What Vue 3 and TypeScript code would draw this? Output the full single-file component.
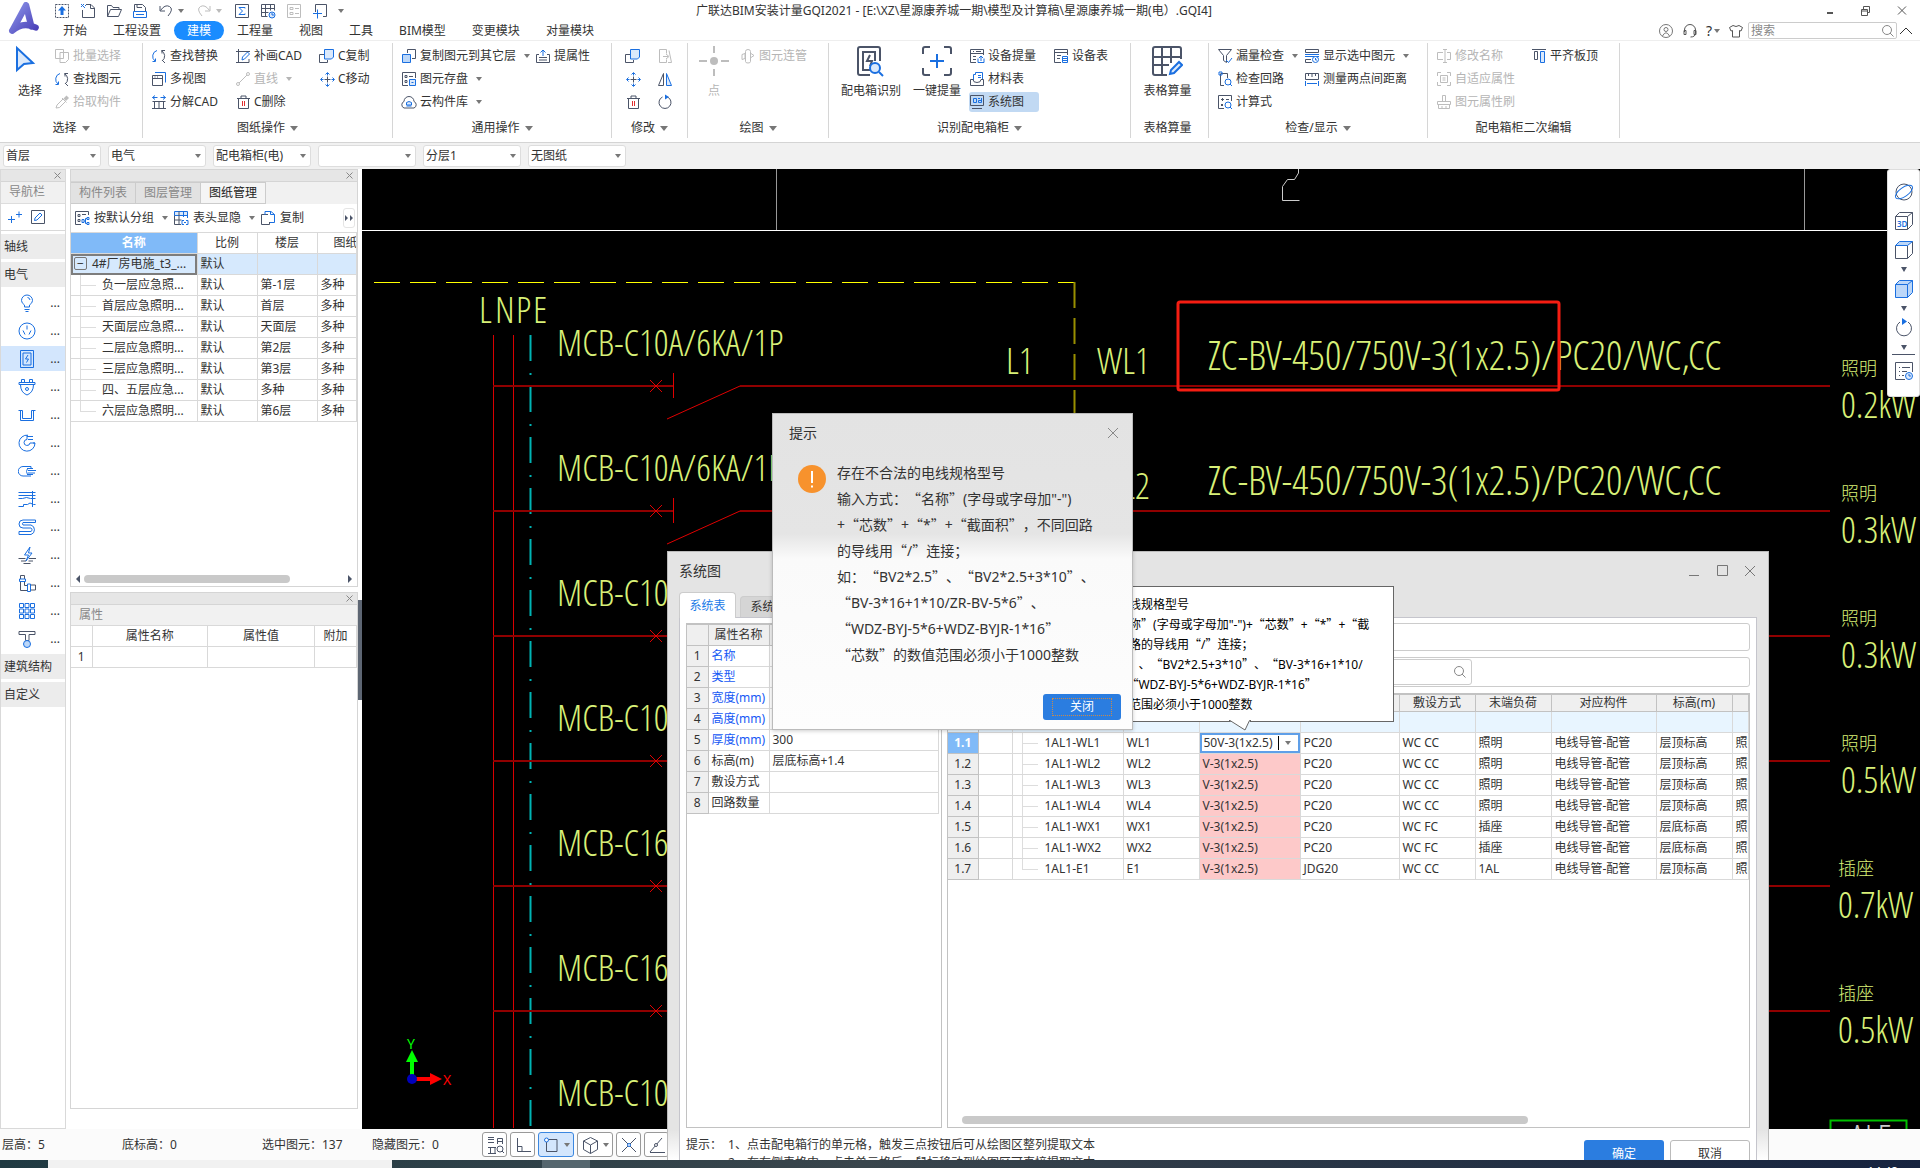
<script setup lang="ts">
interface Btn { i: string; t: string; dis?: boolean; caret?: boolean; on?: boolean }
interface Group { label: string; more?: boolean; big: Btn[]; cols: Btn[][] }

const D = '#4b5468'
const B = '#1a6fe0'
const G = '#bdbdbd'
const s = (c: string, d: string, f = 'none'): string => `<path d="${d}" stroke="${c}" fill="${f}"/>`
const f = (c: string, d: string): string => `<path d="${d}" fill="${c}" stroke="none"/>`

const trash = s(D, 'M2 4.500h13M6 4.500V2h5v2.500M3.500 5v9.500h10V5') + s('#e03030', 'M7.500 7v5M9.500 7v5')
const move = s(D, 'M8.500 5.500v6M5.500 8.500h6') + s(B, 'M6.500 3.500l2-2 2 2M6.500 13.500l2 2 2-2M3.500 6.500l-2 2 2 2M13.500 6.500l2 2-2 2M8.500 2v2.500M8.500 12.500v2.500M2 8.500h2.500M12.500 8.500h2.500')
const copy = s(D, 'M5 6.500H.5v8h8V12') + s(B, 'M5.500 1.500h9v7.500l-2 2h-7z', '#dbe9fb')
const find = s(B, 'M6 2.500a6 6 0 0 0-2 10.500M1.500 13.500h3V10.500', 'none') + s(D, 'M10 2.500a6 6 0 0 1 1 10.500M14 2.500h-3V5.500M11 12l3 3')

const icons: Record<string, string> = {
  logo: `<defs><linearGradient id="lg" x1="0" y1="0" x2="1" y2="1"><stop offset="0" stop-color="#8b94e8"/><stop offset="1" stop-color="#4a3fb8"/></linearGradient></defs><path d="M4 27L17 3l5 20M4 27q10-9 22-3" fill="none" stroke="url(#lg)" stroke-width="6" stroke-linecap="round" stroke-linejoin="round"/>`,
  up: `<path d="M1.500 1.500h13v13h-13z" fill="none" stroke="${D}" stroke-dasharray="2 1"/>` + f(B, 'M8 3l4 4.500H9.500V12h-3V7.500H4z'),
  neu: s(D, 'M6 1.500h5l3.500 3.500v9.500h-12V7M10.500 1.500v4h4') + f(B, 'M1 1h1v1H1zM3 1h1v1H3zM2 2h1v1H2zM1 3h1v1H1zM3 3h1v1H3zM5 2h1v1H5zM4 4h1v1H4z'),
  open: s(D, 'M1.500 13.500v-11h4l1.500 2h6v2M1.500 13.500l3-7h11l-3 7z'),
  save: s(D, 'M2.500 8V1.500h8l3 3V8M5 1.500v3h5') + s(B, 'M1.500 14.500v-6h13v6zM4 11.500h8'),
  undo: s(D, 'M2 3v5h5M2.500 7.500Q7 1 11.500 3.500T10 13'),
  redo: s(G, 'M14 3v5H9M13.500 7.500Q9 1 4.500 3.500T6 13'),
  sum: s(D, 'M1.500 1.500h13v13h-13z') + s(B, 'M11 5.500V4.500H5L8.500 8 5 11.500h6v-1'),
  grid: s(D, 'M1.500 1.500h13v6M1.500 1.500v12h6M1.500 5.500h13M1.500 9.500h7M5.500 1.500v12M10.500 1.500v6') + `<circle cx="12" cy="12" r="3" fill="#dbe9fb" stroke="${B}"/>` + s(B, 'M12 10v2h2'),
  listg: s(G, 'M1.500 1.500h13v13h-13zM4 4.500h3v2H4zM4 9.500h3v2H4zM9 5.500h4M9 10.500h4'),
  frame: s(D, 'M6 1.500H3.500V6M10 1.500h4.500v12H11') + s(D, 'M6 1.500h5M3.500 5v4') + s(B, 'M1 10.500h9M5.500 6.500v9'),
  cursor: `<path d="M3 3v22l7-6 9-1z" fill="#dbe9fb" stroke="${B}" stroke-width="2"/>`,
  batch: s(G, 'M1.500 1.500h8v9h-8zM6 4.500h8.500v7l-3 3H6z', '#fff'),
  find,
  pick: s(G, 'M2 14l1-3 6-6 2.500 2.500-6 6zM8 4l4.500 4.500', 'none') + f(G, 'M9.500 4.500l3-3 2.500 2.500-3 3z'),
  views: s(D, 'M1.500 4.500h10v10h-10zM1.500 7.500h10M3.500 6h1M6 6h1') + s(B, 'M4 1.500h10.500v10'),
  split: s(B, 'M1.500 3.500h5M4 1.500l-2.500 2L4 5.500M9.500 3.500h5M12 1.500l2.500 2L12 5.500') + s(D, 'M1.500 7.500h13M3.500 7.500v7h9v-7M8 7.500v7M1 14.500h3M12 14.500h3'),
  draw: s(D, 'M1 3.500h14M3.500 1v13M1 14.500h13V11') + s(B, 'M7 12l.5-3 5-5 2 2-5 5z'),
  line: s(G, 'M3 13L13 3') + `<circle cx="13" cy="3" r="1.500" fill="#fff" stroke="${G}"/><circle cx="3" cy="13" r="1.500" fill="#fff" stroke="${G}"/>`,
  trash, copy, move,
  layer: s(B, 'M1.500 6.500h8v8h-8z', '#bcd7f8') + s(D, 'M6.500 5V1.500h8v9H11'),
  attr: s(B, 'M8 8V2M5.500 4.500L8 2l2.500 2.500') + s(D, 'M4 6.500H1.500v8h13v-8H12M4 9.500h8M4 12h8'),
  store: s(D, 'M7 14.500H1.500v-13h13V7M4 4.500h2v2H4zM8 5.500h4M4 9.500h2v2H4z') + s(B, 'M8.500 8.500h6v6h-6zM10.500 11.500h2', '#dbe9fb'),
  cloud: s(D, 'M3 14A3.500 3.500 0 0 1 3 7.500 5 5 0 0 1 13 7.500 3.500 3.500 0 0 1 13 14z') + s(B, 'M5.500 8.500q2.500-2 5 0v2.500h-5zM5.500 12h5', '#dbe9fb'),
  stretch: s(G, 'M2.500 1.500h7v4M2.500 1.500v13h7v-3M6 8.500h5M9 6l3 2.500L9 11M12 2.500l2.500 12H11'),
  mirror: s(D, 'M6.500 2.500v12h-5z') + s(B, 'M9.500 2.500v12h5z', '#dbe9fb'),
  rotate: s(D, 'M5.500 3a6 6 0 1 0 5 0') + f(B, 'M8 .5L12 3 8 5.500z'),
  point: `<circle cx="16" cy="16" r="4" fill="${G}"/><path d="M16 1v7M16 24v7M1 16h8M23 16h8" stroke="${G}" stroke-width="2"/>`,
  pipe: s(G, 'M5.500 3.500a2.500 2 0 0 1 5 0v10a2.500 1.500 0 0 1-5 0zM2 6.500l3-1v5l-3 1zM11 5.500l3 2-3 2'),
  box: `<g stroke-width="2" transform="translate(-2 0)"><path d="M27 16V4a2 2 0 0 0-2-2H7a2 2 0 0 0-2 2v24a2 2 0 0 0 2 2h10" stroke="${D}" fill="none"/><path d="M22 16V7H10v18h7" stroke="${D}" fill="none"/><path d="M17 10l-3 6h5l-2 5" stroke="${D}" fill="none"/><circle cx="22" cy="23" r="5" stroke="${B}" fill="#dbe9fb"/><path d="M26 27l4 4" stroke="${B}"/></g>`,
  oneKey: `<g stroke-width="2" fill="none"><path d="M9 2H4a2 2 0 0 0-2 2v5M23 2h5a2 2 0 0 1 2 2v5M2 23v5a2 2 0 0 0 2 2h5M30 23v5a2 2 0 0 1-2 2h-5" stroke="${D}"/><path d="M9 16h14M16 9v14" stroke="${B}"/></g>`,
  devUp: s(D, 'M7 14.500H1.500v-13h13V7M1.500 5.500h13M4 3.500h1M7 3.500h5M4 8.500h3M4 11.500h3') + s(B, 'M9 10.500v4h6v-4M12 13V8M10 10l2-2 2 2'),
  material: s(B, 'M4.500 9V3.500h2v-2h7V9M9 4.500h3M9 6.500h3') + s(D, 'M4 8.500H1.500v6h13v-6H12q0 3-4 3t-4-3z'),
  system: s(D, 'M1.500 1.500h13v10h-13zM3 14.500h10') + s(B, 'M4.500 4.500h3v4h-3zM9 4.500h2M12.500 4v4.500h-3V6.500h3'),
  devTab: s(D, 'M8 14.500H1.500v-13h13V7M1.500 4.500h13M4 7.500h4M4 10.500h3') + s(B, 'M9.500 8.500h5v6h-5zM9.500 10.500h5M9.500 12.500h5'),
  sheet: `<g stroke-width="2" fill="none"><path d="M30 14V4a2 2 0 0 0-2-2H4a2 2 0 0 0-2 2v24a2 2 0 0 0 2 2h12M2 12h28M2 20h16M11 2v28M20 2v16" stroke="${D}"/><path d="M19 29l1-4 8-8 3 3-8 8z" stroke="${B}" fill="#dbe9fb"/></g>`,
  funnel: s(D, 'M1.500 1.500h13l-5 6v7l-3-2V7.500z') + s(B, 'M9 12l2.500 2.500L15 10'),
  loop: s(D, 'M3.500 3v11.500H7M3.500 2.500h7V7') + s(B, 'M2 1h3v3H2z') + `<circle cx="11" cy="11" r="3" fill="none" stroke="${B}"/>` + s(B, 'M13 13l2 2'),
  calc: s(D, 'M14.500 7V1.500h-13v13H7M4 5.500h3M5.500 4v3M9 5.500h3M4 10l2 2M6 10l-2 2') + `<circle cx="11" cy="11" r="3" fill="#fff" stroke="${B}"/>` + s(B, 'M13 13l2 2'),
  show: s(D, 'M1.500 1.500h13v3h-13zM7 11.500H1.500v3H8') + s(B, 'M1 6.500h14M1 8.500h14') + `<circle cx="11.500" cy="11.500" r="3" fill="#fff" stroke="${B}"/>` + s(B, 'M11.500 10v2h1.500'),
  ruler: s(D, 'M1.500 2.500h13v6h-13zM4.500 2.500V5M8 2.500V6M11.500 2.500V5') + s(B, 'M1.500 10v5M14.500 10v5M3 12.500h10'),
  rename: s(G, 'M7 4.500H1.500v7H7M11 4.500h3.500v7H11M9 2v12M7 1.500h4M7 14.500h4'),
  adapt: s(G, 'M1.500 5V1.500H5M11 1.500h3.500V5M14.500 11v3.500H11M5 14.500H1.500V11M4.500 4.500h7v7h-7zM6.500 7h3M6.500 9h3'),
  brush: s(G, 'M1.500 7.500h13v3h-13zM6.500 7.500v-6h3v6M2.500 10.500v4h11v-4M6 12v2.500M10 12v2.500'),
  align: s(D, 'M1 1.500h14M3.500 3.500h3v8h-3z') + s(B, 'M9.500 3.500h4v11h-4z', '#dbe9fb'),
  user: `<circle cx="8" cy="8" r="6.500" fill="none" stroke="#777"/><circle cx="8" cy="6.500" r="2" fill="none" stroke="#777"/><path d="M4.500 13Q8 6.500 11.500 13" fill="none" stroke="#777"/>`,
  head: s('#555', 'M2.500 9V7a5.500 5.500 0 0 1 11 0v3q0 4-5 4M2 7.500h2v4H2zM12 7.500h2v4h-2z'),
  shirt: s('#555', 'M5 2.500L1.500 4.500 3 8l1.500-.5v6.500h7V7.500L13 8l1.500-3.500L11 2.500q-3 2-6 0z'),
  search: `<circle cx="7" cy="7" r="4.500" fill="none" stroke="#888"/>` + s('#888', 'M10 10l3.500 3.500'),
  chevUp: s('#333', 'M2 11l6-6 6 6'),
  min: s('#555', 'M5 10.500h6M5 9.500h6'),
  restore: s('#555', 'M3.500 6.500h6v6h-6zM5.500 6V3.500h6v6H10M3.500 8h6'),
  close: s('#555', 'M4 3.500l8 8M12 3.500l-8 8'),
  x: s('#888', 'M1.500 1.500l6 6M7.500 1.500l-6 6'),
  more: f(D, 'M1 4l3 3-3 3zM6 4l3 3-3 3z'),
  plus: s(B, 'M1 10.500h7M4.500 7v7M9 5.500h6M12 2.500v6'),
  edit: s(D, 'M1.500 1.500h13v13h-13z') + s(B, 'M4.500 11.500l.5-2.500 5-5 2 2-5 5z'),
  group: s(D, 'M7 14.500H1.500v-13h13V5M4 4.500h2v2H4zM8 4.500h4M4 9.500h2v2H4z') + s(B, 'M8 9.500h2v3H8zM13 7.500h2v2h-2zM13 12.500h2v2h-2zM10 11h1.500V8.500H13M11.500 11v2.500H13'),
  thead: s(B, 'M1.500 1.500h13v4h-13z', '#dbe9fb') + s(D, 'M1.500 5.500v9H8M1.500 10h7M6 1.500v13') + s(B, 'M14.500 5v3M10.500 1.500V7M9 10.500h2M13 10.500h2v4h-2M11 14.500H9v-4M11 12.500h2'),
  dup: s(D, 'M5 4.500H1.500v10h8V12M5 4.500h3') + s(B, 'M5 5V1.500h6l3.500 3v8H10M10.500 1.500v3h4'),
  bulb: s(B, 'M6.500 13v-2Q3.500 9 3.500 6.500a5.500 5.500 0 0 1 11 0Q14.500 9 11.500 11v2zM6.500 15.500h5M7.500 17.500h3M9.500 3.500q2 0 2.500 2.500'),
  socket: `<circle cx="9" cy="9" r="8" fill="none" stroke="${B}"/>` + s(B, 'M9 3.500v4M5 8.500l2 4M13 8.500l-2 4'),
  panel: s(B, 'M2.500 .5h13v17h-13zM5 3h8v12H5z') + s(B, 'M10 5L7.500 9h3L8.500 12.500'),
  smoke: s(B, 'M1 4.500h16v2H1zM3.500 1.500h3v3h-3zM11.500 1.500h3v3h-3zM2.500 6.500q0 8 6.500 10.500 6.500-2.500 6.500-10.500') + `<circle cx="9" cy="11" r="1.500" fill="none" stroke="${B}"/>`,
  tray: s(B, 'M.5 4.500h4v8h9v-8h4M2.500 4.500v10h13v-10'),
  coil: s(B, 'M10 1.200A8 8 0 1 0 17 9h-5a3 3 0 1 1-3-3.500M9 1v4.500M9 2.500h6M10 5.500h5M15 9h2'),
  cable: s(B, 'M9 4.500H5a4.500 4.500 0 0 0 0 9.500h8M9 4.500h4v2M9 6.500h6M10 8.500h8M10 11h7M9 12.500h6M9.500 6.500q-2 3 0 6'),
  wires: s(B, 'M.5 2.500h17M.5 5.500h17M.5 8.500h4q4-2 8 0h5M14.500 1v16M.5 16.500h5v-2h4q2-3 6 0h2'),
  hose: s(B, 'M17.500 4.500V2H5a4 4 0 0 0 0 8h8a2 2 0 0 1 0 3.500H1v3h12a5 5 0 0 0 0-9.500H5a2 2 0 0 1 0-2.500z'),
  ground: s(B, 'M12 1L6.500 9h4L8 15l6-8h-3.500z') + s(D, 'M.5 12.500h7M11 12.500h7M3 15h5M10.500 15H15M5.500 17.500h7'),
  elbow: s(D, 'M2.500 5V1.500h4V5M2.500 7.500v9h7M6.500 7.500v4h3M12.500 11h5v5h-5') + s(B, 'M1.500 5h6v2.500h-6zM9.500 10h3v7.500h-3z'),
  cells: s(B, 'M1.500 1.500h4v4h-4zM7 1.500h4v4H7zM12.500 1.500h4v4h-4zM1.500 7h4v4h-4zM7 7h4v4H7zM12.500 7h4v4h-4zM1.500 12.500h4v4h-4zM7 12.500h4v4H7zM12.500 12.500h4v4h-4z'),
  tee: s(D, 'M1 1.500h16v3h-6v6H7.500v-6H1z') + `<circle cx="9" cy="14" r="3.500" fill="#bcd7f8" stroke="${B}"/>`,
  orbit: `<circle cx="10" cy="10" r="8" fill="none" stroke="${D}"/><ellipse cx="10" cy="10" rx="10" ry="4.500" transform="rotate(-35 10 10)" fill="none" stroke="${B}"/>`,
  cube3: s(D, 'M1.500 5.500h12v13h-12zM1.500 5.500l4-4h13v12l-5 5M13.500 5.500l5-4') + `<text x="3" y="16" font-size="8" font-family="Noto Sans" font-weight="600" fill="${B}">3D</text>`,
  cubeTop: s(D, 'M1.500 5.500v13h12v-13M18.500 1.500v12l-5 5') + s(B, 'M1.500 5.500l4-4h13l-5 4z', '#bcd7f8'),
  cubeFill: s(B, 'M1.500 5.500h12v13h-12zM1.500 5.500l4-4h13v12l-5 5M13.500 5.500l5-4', '#bcd7f8'),
  spin: s(D, 'M6 4a7.500 7.500 0 1 0 8 0') + f(B, 'M8 0l5 3.500L8 7z'),
  detail: s(D, 'M11 18.500H1.500v-17h17V11M5 6.500h1M8 6.500h8M5 10.500h1M8 10.500h5M5 14.500h1M8 14.500h2') + `<circle cx="15" cy="15" r="3.500" fill="#dbe9fb" stroke="${B}"/>` + s(B, 'M15 13v2h2'),
  stA: s(D, 'M2 3.500h6M2 6.500h6M2 1.500h6M11.500 8V2.500h5V8M11.500 5.500h5M2 17.500h8M4.500 11v6M9 11v6M2 11.500h8') + `<circle cx="14" cy="13" r="3" fill="none" stroke="${D}"/>` + s(D, 'M16 15l2 2'),
  stB: s(D, 'M3.500 2v13.500H17M3.500 10.500H8v5'),
  stC: s(D, 'M5 3.500h10v12H4.500V5') + `<circle cx="4.500" cy="4" r="2" fill="#fff" stroke="${B}"/>`,
  stD: s(D, 'M9.500 1.500l7 3.500v8.500l-7 4-7-4V5zM2.500 5l7 4 7-4M9.500 9v8.500'),
  stE: s(D, 'M2 2l14 14M16 2L2 16') + `<circle cx="9" cy="9" r="1.500" fill="#fff" stroke="${B}"/>`,
  stF: s(D, 'M2 16L14 2M2 16.500h15') + `<circle cx="8" cy="9" r="1.500" fill="#fff" stroke="${D}"/>`,
}

const quick = ['up', 'neu', 'open', 'save', 'undo', 'redo', 'sum', 'grid', 'listg', 'frame']
const tabs = ['开始', '工程设置', '建模', '工程量', '视图', '工具', 'BIM模型', '变更模块', '对量模块']
const groups: Group[] = [
  { label: '选择', more: true, big: [{ i: 'cursor', t: '选择' }], cols: [[{ i: 'batch', t: '批量选择', dis: true }, { i: 'find', t: '查找图元' }, { i: 'pick', t: '拾取构件', dis: true }]] },
  { label: '图纸操作', more: true, big: [], cols: [
    [{ i: 'find', t: '查找替换' }, { i: 'views', t: '多视图' }, { i: 'split', t: '分解CAD' }],
    [{ i: 'draw', t: '补画CAD' }, { i: 'line', t: '直线', dis: true, caret: true }, { i: 'trash', t: 'C删除' }],
    [{ i: 'copy', t: 'C复制' }, { i: 'move', t: 'C移动' }]] },
  { label: '通用操作', more: true, big: [], cols: [
    [{ i: 'layer', t: '复制图元到其它层', caret: true }, { i: 'store', t: '图元存盘', caret: true }, { i: 'cloud', t: '云构件库', caret: true }],
    [{ i: 'attr', t: '提属性' }]] },
  { label: '修改', more: true, big: [], cols: [
    [{ i: 'copy', t: '' }, { i: 'move', t: '' }, { i: 'trash', t: '' }],
    [{ i: 'stretch', t: '', dis: true }, { i: 'mirror', t: '' }, { i: 'rotate', t: '' }]] },
  { label: '绘图', more: true, big: [{ i: 'point', t: '点', dis: true }], cols: [[{ i: 'pipe', t: '图元连管', dis: true }]] },
  { label: '识别配电箱柜', more: true, big: [{ i: 'box', t: '配电箱识别' }, { i: 'oneKey', t: '一键提量' }], cols: [
    [{ i: 'devUp', t: '设备提量' }, { i: 'material', t: '材料表' }, { i: 'system', t: '系统图', on: true }],
    [{ i: 'devTab', t: '设备表' }]] },
  { label: '表格算量', big: [{ i: 'sheet', t: '表格算量' }], cols: [] },
  { label: '检查/显示', more: true, big: [], cols: [
    [{ i: 'funnel', t: '漏量检查', caret: true }, { i: 'loop', t: '检查回路' }, { i: 'calc', t: '计算式' }],
    [{ i: 'show', t: '显示选中图元', caret: true }, { i: 'ruler', t: '测量两点间距离' }]] },
  { label: '配电箱柜二次编辑', big: [], cols: [
    [{ i: 'rename', t: '修改名称', dis: true }, { i: 'adapt', t: '自适应属性', dis: true }, { i: 'brush', t: '图元属性刷', dis: true }],
    [{ i: 'align', t: '平齐板顶' }]] },
]
const combos = ['首层', '电气', '配电箱柜(电)', '', '分层1', '无图纸']
const navIcons = ['bulb', 'socket', 'panel', 'smoke', 'tray', 'coil', 'cable', 'wires', 'hose', 'ground', 'elbow', 'cells', 'tee']
const drawings = [
  ['负一层应急照...', '默认', '第-1层', '多种'],
  ['首层应急照明...', '默认', '首层', '多种'],
  ['天面层应急照...', '默认', '天面层', '多种'],
  ['二层应急照明...', '默认', '第2层', '多种'],
  ['三层应急照明...', '默认', '第3层', '多种'],
  ['四、五层应急...', '默认', '多种', '多种'],
  ['六层应急照明...', '默认', '第6层', '多种'],
]
const props: { n: string; v: string; b?: boolean }[] = [
  { n: '名称', v: '', b: true }, { n: '类型', v: '', b: true }, { n: '宽度(mm)', v: '', b: true }, { n: '高度(mm)', v: '', b: true },
  { n: '厚度(mm)', v: '300', b: true }, { n: '标高(m)', v: '层底标高+1.4' }, { n: '敷设方式', v: '' }, { n: '回路数量', v: '' },
]
const circuits = [
  ['WL1', 'PC20', 'WC CC', '照明', '层顶标高'],
  ['WL2', 'PC20', 'WC CC', '照明', '层顶标高'],
  ['WL3', 'PC20', 'WC CC', '照明', '层顶标高'],
  ['WL4', 'PC20', 'WC CC', '照明', '层顶标高'],
  ['WX1', 'PC20', 'WC FC', '插座', '层底标高'],
  ['WX2', 'PC20', 'WC FC', '插座', '层底标高'],
  ['E1', 'JDG20', 'WC CC', '1AL', '层顶标高'],
]
const breakers = ['MCB-C10A/6KA/1P', 'MCB-C10A/6KA/1P', 'MCB-C10A', 'MCB-C10A', 'MCB-C16', 'MCB-C16', 'MCB-C10A']
const loads = [['照明', '0.2kW'], ['照明', '0.3kW'], ['照明', '0.3kW'], ['照明', '0.5kW'], ['插座', '0.7kW'], ['插座', '0.5kW']]
const alertLines = [
  '存在不合法的电线规格型号', '输入方式：“名称”(字母或字母加"-")', '+“芯数”+“*”+“截面积”，不同回路', '的导线用“/”连接；',
  '如：“BV2*2.5”、“BV2*2.5+3*10”、', '“BV-3*16+1*10/ZR-BV-5*6”、', '“WDZ-BYJ-5*6+WDZ-BYJR-1*16”', '“芯数”的数值范围必须小于1000整数',
]
const tipLines = [
  '存在不合法的电线规格型号', '输入方式：“名称”(字母或字母加"-")+“芯数”+“*”+“截', '面积”，不同回路的导线用“/”连接；',
  '如：“BV2*2.5”、“BV2*2.5+3*10”、“BV-3*16+1*10/', 'ZR-BV-5*6”、“WDZ-BYJ-5*6+WDZ-BYJR-1*16”', '“芯数”的数值范围必须小于1000整数',
]
// Curly quotes are set from the CJK face so that they take a full em.
const parts = (line: string): string[] => line.split(/([“”])/).filter(Boolean)
const isQuote = (p: string): boolean => p === '“' || p === '”'
</script>

<template>
  <div class="app">
    <header class="top">
      <svg class="logo" viewBox="0 0 32 32" v-html="icons.logo" />
      <div class="topmain">
        <div class="titlebar">
          <div class="quick">
            <template v-for="q in quick" :key="q">
              <button class="qb" :aria-label="q"><svg class="ic" viewBox="0 0 16 16" v-html="icons[q]" /></button>
              <i v-if="q === 'undo' || q === 'redo'" class="caret small" :class="{ dim: q === 'redo' }" />
            </template>
            <i class="caret small" />
          </div>
          <h1>广联达BIM安装计量GQI2021 - [E:\XZ\星源康养城一期\模型及计算稿\星源康养城一期(电）.GQI4]</h1>
          <div class="winbtns">
            <button v-for="w in ['min', 'restore', 'close']" :key="w" :aria-label="w"><svg class="ic" viewBox="0 0 16 16" v-html="icons[w]" /></button>
          </div>
        </div>
        <div class="tabrow">
          <nav>
            <button v-for="t in tabs" :key="t" class="tab" :class="{ on: t === '建模' }">{{ t }}</button>
          </nav>
          <div class="tools">
            <button aria-label="user"><svg class="ic" viewBox="0 0 16 16" v-html="icons.user" /></button>
            <button aria-label="support"><svg class="ic" viewBox="0 0 16 16" v-html="icons.head" /></button>
            <button class="help">?<i class="caret small" /></button>
            <button aria-label="skin"><svg class="ic" viewBox="0 0 16 16" v-html="icons.shirt" /></button>
            <label class="search"><input type="text" placeholder="搜索" aria-label="搜索"><svg class="ic" viewBox="0 0 16 16" v-html="icons.search" /></label>
            <button aria-label="collapse"><svg class="ic" viewBox="0 0 16 16" v-html="icons.chevUp" /></button>
          </div>
        </div>
      </div>
    </header>

    <section class="ribbon">
      <div v-for="(g, n) in groups" :key="g.label" class="group" :class="'g' + n">
        <div class="gtop">
          <button v-for="b in g.big" :key="b.t" class="big" :class="{ dis: b.dis }"><svg class="bic" viewBox="0 0 32 32" v-html="icons[b.i]" /><span>{{ b.t }}</span></button>
          <div v-for="(c, k) in g.cols" :key="k" class="col">
            <button v-for="b in c" :key="b.i" class="rb" :class="{ dis: b.dis, on: b.on }" :aria-label="b.t || b.i"><svg class="ic" viewBox="0 0 16 16" v-html="icons[b.i]" /><span v-if="b.t">{{ b.t }}</span><i v-if="b.caret" class="caret small" /></button>
          </div>
        </div>
        <div class="glabel">{{ g.label }}<i v-if="g.more" class="caret" /></div>
      </div>
    </section>

    <section class="combos">
      <label v-for="(c, n) in combos" :key="n" class="combo"><select :aria-label="'combo ' + n"><option>{{ c }}</option></select><i class="caret small" /></label>
    </section>

    <main class="body">
      <aside class="nav">
        <div class="strip"><button aria-label="close"><svg viewBox="0 0 9 9" v-html="icons.x" /></button></div>
        <div class="navtitle">导航栏</div>
        <div class="navtools"><button aria-label="add"><svg class="ic" viewBox="0 0 16 16" v-html="icons.plus" /></button><button aria-label="edit"><svg class="ic" viewBox="0 0 16 16" v-html="icons.edit" /></button></div>
        <div class="navlist">
          <button class="cat">轴线</button>
          <button class="cat">电气</button>
          <button v-for="i in navIcons" :key="i" class="item" :class="{ on: i === 'panel' }"><svg class="nic" viewBox="0 0 18 18" v-html="icons[i]" /><span>...</span></button>
          <button class="cat">建筑结构</button>
          <button class="cat">自定义</button>
        </div>
      </aside>

      <aside class="side">
        <section class="panel drawpanel">
          <div class="strip"><button aria-label="close"><svg viewBox="0 0 9 9" v-html="icons.x" /></button></div>
          <div class="ptabs"><button>构件列表</button><button>图层管理</button><button class="on">图纸管理</button></div>
          <div class="ptools">
            <button><svg class="ic" viewBox="0 0 16 16" v-html="icons.group" />按默认分组<i class="caret small" /></button>
            <button><svg class="ic" viewBox="0 0 16 16" v-html="icons.thead" />表头显隐<i class="caret small" /></button>
            <button><svg class="ic" viewBox="0 0 16 16" v-html="icons.dup" />复制</button>
            <button class="more" aria-label="more"><svg viewBox="0 0 10 14" v-html="icons.more" /></button>
          </div>
          <table class="grid draws">
            <colgroup><col class="c125"><col class="c61"><col class="c61"><col></colgroup>
            <thead><tr><th class="sel">名称</th><th>比例</th><th>楼层</th><th class="cut">图纸</th></tr></thead>
            <tbody>
              <tr class="root"><td><b>−</b>4#厂房电施_t3_...</td><td>默认</td><td /><td /></tr>
              <tr v-for="r in drawings" :key="r[0]"><td class="tree">{{ r[0] }}</td><td>{{ r[1] }}</td><td>{{ r[2] }}</td><td>{{ r[3] }}</td></tr>
            </tbody>
          </table>
          <div class="hscroll"><i class="l" /><span /><i class="r" /></div>
        </section>
        <section class="panel attrpanel">
          <div class="strip"><button aria-label="close"><svg viewBox="0 0 9 9" v-html="icons.x" /></button></div>
          <div class="atitle">属性</div>
          <table class="grid attrs">
            <colgroup><col class="c21"><col><col class="c107"><col class="c42"></colgroup>
            <thead><tr><th /><th>属性名称</th><th>属性值</th><th>附加</th></tr></thead>
            <tbody><tr><td class="num">1</td><td /><td /><td /></tr></tbody>
          </table>
        </section>
      </aside>
      <div class="gutter"><button aria-label="collapse panel" /></div>

      <section class="canvas">
        <svg class="cad">
          <g transform="translate(-362 -169)">
            <g stroke="#fff" fill="none">
              <path d="M362 230.500H1920" />
              <path d="M776.500 169V230M1804.500 169V230" stroke="#999" />
              <path d="M1298.500 169v4l-4 6.500h-7l-5 7V200.500h17" stroke="#ccc" />
            </g>
            <path d="M374 282.500H1074" stroke="#ff0" stroke-dasharray="26 10" fill="none" />
            <path d="M1074.500 282V460" stroke="#998f00" stroke-width="2" stroke-dasharray="26 10" fill="none" />
            <path d="M493.500 335V1128M513.500 335V1128" stroke="#d80000" />
            <path d="M530.500 335V1128" stroke="#00b4b4" stroke-width="2" stroke-dasharray="26 12 2 11" />
            <g v-for="(m, k) in breakers" :key="k" :transform="`translate(0 ${k * 125})`">
              <path d="M493 386H673M740 386H1830" stroke="#900000" stroke-width="2" />
              <path d="M650 380l12 12M662 380l-12 12M673.500 373v25M667 419l73-33" stroke="#e00000" fill="none" />
              <text class="ct" x="557" y="356">{{ m }}</text>
              <text v-if="k === 0" class="ct" x="1006" y="374">L1</text>
              <text v-if="k < 2" class="ct" x="1097" y="374">WL{{ k + 1 }}</text>
              <text v-if="k < 2" class="ct spec" x="1208" y="370">ZC-BV-450/750V-3(1x2.5)/PC20/WC,CC</text>
            </g>
            <text v-for="(c, k) in 'LNPE'" :key="c" class="ct" :x="[479, 495, 516, 533][k]" y="323">{{ c }}</text>
            <g v-for="(l, k) in loads" :key="'l' + k" :transform="`translate(${k > 3 ? -3 : 0} ${k * 125})`">
              <text class="cj" x="1841" y="375">{{ l[0] }}</text>
              <text class="ct" x="1841" y="418">{{ l[1] }}</text>
            </g>
            <path d="M1830.500 1135V1120.500H1906.500V1135" stroke="#00c000" stroke-width="2" fill="none" />
            <text class="ct wh" x="1850" y="1151">ALE</text>
            <path d="M412 1078V1062" stroke="#0f0" stroke-width="4" /><path d="M406 1062l6-12 6 12z" fill="#0f0" />
            <path d="M412 1079H430" stroke="#f00" stroke-width="4" /><path d="M430 1073l12 6-12 6z" fill="#f00" />
            <circle cx="412" cy="1079" r="5" fill="#00b" />
            <text class="ax" x="407" y="1049" fill="#0f0">Y</text><text class="ax" x="443" y="1085" fill="#f00">X</text>
            <rect x="1178" y="302" width="381" height="88" rx="2" fill="none" stroke="#f51d12" stroke-width="3" />
          </g>
        </svg>
        <div class="viewbar">
          <button aria-label="orbit"><svg class="vic" viewBox="0 0 20 20" v-html="icons.orbit" /></button>
          <button aria-label="3D"><svg class="vic" viewBox="0 0 20 20" v-html="icons.cube3" /></button>
          <button aria-label="top"><svg class="vic" viewBox="0 0 20 20" v-html="icons.cubeTop" /><i class="caret" /></button>
          <button aria-label="solid"><svg class="vic" viewBox="0 0 20 20" v-html="icons.cubeFill" /><i class="caret" /></button>
          <button aria-label="rotate"><svg class="vic" viewBox="0 0 20 20" v-html="icons.spin" /><i class="caret" /></button>
          <hr>
          <button aria-label="detail"><svg class="vic" viewBox="0 0 20 20" v-html="icons.detail" /></button>
        </div>
      </section>
    </main>

    <footer class="status">
      <span class="s1">层高：5</span><span class="s2">底标高：0</span><span class="s3">选中图元：137</span><span class="s4">隐藏图元：0</span>
      <div class="stb">
        <button v-for="k in ['stA', 'stB', 'stC', 'stD', 'stE', 'stF']" :key="k" :aria-label="k" :class="{ on: k === 'stC', wide: k === 'stC' || k === 'stD' }"><svg class="nic" viewBox="0 0 18 18" v-html="icons[k]" /><i v-if="k === 'stC' || k === 'stD'" class="caret small" /></button>
      </div>
    </footer>
    <div class="taskbar"><span class="win" /><span class="lit" /><time>14:48</time></div>

    <section class="dialog" role="dialog" aria-label="系统图">
      <div class="dhead"><h2>系统图</h2><button aria-label="minimize"><svg class="ic" viewBox="0 0 16 16"><path d="M3 12.500h10" stroke="#777" /></svg></button><button aria-label="maximize"><svg class="ic" viewBox="0 0 16 16"><path d="M3.500 2.500h10v10h-10z" stroke="#777" fill="none" /></svg></button><button aria-label="close"><svg class="ic" viewBox="0 0 16 16"><path d="M3 3l10 10M13 3L3 13" stroke="#777" /></svg></button></div>
      <div class="dtabs"><button class="on">系统表</button><button>系统图</button></div>
      <div class="dbody">
        <div class="dcols">
          <div class="pbox">
            <table class="grid ptab">
              <colgroup><col class="c21"><col class="c61"><col></colgroup>
              <thead><tr><th /><th>属性名称</th><th /></tr></thead>
              <tbody><tr v-for="(p, k) in props" :key="p.n"><td class="num">{{ k + 1 }}</td><td :class="{ blue: p.b }">{{ p.n }}</td><td>{{ p.v }}</td></tr></tbody>
            </table>
          </div>
          <div class="rbox">
            <div class="bar1" />
            <div class="bar2"><label class="dsearch"><input type="text" aria-label="search"><svg class="ic" viewBox="0 0 16 16" v-html="icons.search" /></label></div>
            <div class="tbox">
              <table class="grid ctab">
                <colgroup><col class="c30"><col class="c34"><col class="c111"><col class="c76"><col class="c101"><col class="c99"><col class="c76"><col class="c76"><col class="c105"><col class="c76"><col></colgroup>
                <thead><tr><th /><th /><th /><th /><th /><th /><th>敷设方式</th><th>末端负荷</th><th>对应构件</th><th>标高(m)</th><th class="cut">系</th></tr></thead>
                <tbody>
                  <tr class="pale"><td class="num" /><td v-for="k in 10" :key="k" /></tr>
                  <tr v-for="(c, k) in circuits" :key="c[0]">
                    <td class="num" :class="{ cur: k === 0 }">1.{{ k + 1 }}</td><td /><td class="tree">1AL1-{{ c[0] }}</td><td>{{ c[0] }}</td>
                    <td v-if="k === 0" class="edit"><div><input type="text" value="50V-3(1x2.5)" aria-label="导线规格型号"><u /><i class="caret small" /></div></td>
                    <td v-else class="bad">V-3(1x2.5)</td>
                    <td>{{ c[1] }}</td><td>{{ c[2] }}</td><td>{{ c[3] }}</td><td>电线导管-配管</td><td>{{ c[4] }}</td><td>照明</td>
                  </tr>
                </tbody>
              </table>
              <div class="thumb" />
            </div>
          </div>
        </div>
        <div class="dfoot">
          <p>提示：</p>
          <p class="hint">1、点击配电箱行的单元格，触发三点按钮后可从绘图区整列提取文本<br>2、在右侧表格中，点击单元格后，鼠标移动到绘图区可直接提取文本</p>
          <button class="ok">确定</button><button class="cancel">取消</button>
        </div>
      </div>
    </section>

    <div class="tip">
      <p v-for="l in tipLines" :key="l"><template v-for="(p, k) in parts(l)" :key="k"><span :class="{ q: isQuote(p) }">{{ p }}</span></template></p>
      <svg class="tail" viewBox="0 0 22 11"><path d="M0 0h22v1h-1l-5 9L1 1H0z" fill="#fff" /><path d="M0 .5h1l15 9.500 4.500-9.500H22" fill="none" stroke="#666" /></svg>
    </div>

    <section class="alert" role="alertdialog" aria-label="提示">
      <div class="ahead"><h2>提示</h2><button aria-label="close"><svg class="ic" viewBox="0 0 16 16"><path d="M3 3l10 10M13 3L3 13" stroke="#888" /></svg></button></div>
      <div class="acont">
        <svg class="warn" viewBox="0 0 28 28"><circle cx="14" cy="14" r="14" fill="#f7922d" /><path d="M14 6v12M14 20.500v2" stroke="#fff" stroke-width="2" /></svg>
        <div class="atext"><p v-for="l in alertLines" :key="l"><template v-for="(p, k) in parts(l)" :key="k"><span :class="{ q: isQuote(p) }">{{ p }}</span></template></p></div>
      </div>
      <button class="aclose"><span>关闭</span></button>
    </section>
  </div>
</template>

<style>
html, body { margin: 0; background: #fff; }
</style>

<style scoped>
* { box-sizing: border-box; }
.app { position: relative; display: flex; flex-direction: column; height: 100vh; overflow: hidden; font: 12px/16px "Noto Sans", "Noto Sans CJK SC", sans-serif; color: #333; background: #fff; text-spacing-trim: space-all; }
button { font: inherit; color: inherit; background: none; border: 0; padding: 0; margin: 0; white-space: nowrap; }
input, select { font: inherit; color: inherit; border: 0; outline: 0; background: none; padding: 0; min-width: 0; }
h1, h2, p { margin: 0; font-weight: 400; font-size: inherit; }
svg { display: block; flex: none; }
.ic { width: 16px; height: 16px; }
.nic { width: 18px; height: 18px; }
.vic { width: 20px; height: 20px; }
.bic { width: 32px; height: 32px; }
.caret { display: inline-block; flex: none; border: 4px solid transparent; border-top: 5px solid #777; border-bottom: 0; }
.caret.small { border-width: 3px; border-top-width: 4px; border-bottom: 0; }
.caret.dim { border-top-color: #bbb; }

.top { display: flex; height: 41px; border-bottom: 1px solid #eee; }
.logo { width: 34px; height: 34px; margin: 2px 8px 0 8px; }
.topmain { flex: 1; display: flex; flex-direction: column; }
.titlebar { position: relative; display: flex; height: 22px; align-items: center; }
.quick { display: flex; align-items: center; gap: 10px; padding-left: 4px; }
.quick .caret { margin: 0 2px 0 -6px; }
.quick > .caret:last-child { margin-left: 0; }
.titlebar h1 { position: absolute; left: 646px; white-space: nowrap; }
.winbtns { margin-left: auto; display: flex; gap: 20px; padding-right: 10px; }
.tabrow { display: flex; align-items: center; justify-content: space-between; height: 19px; }
.tabrow nav { display: flex; }
.tab { height: 19px; line-height: 19px; padding: 0 13px; }
.tab.on { background: #1a8cff; color: #fff; border-radius: 10px; }
.tools { display: flex; align-items: center; gap: 8px; padding-right: 6px; }
.help { display: flex; align-items: center; gap: 2px; font-size: 14px; }
.search { display: flex; align-items: center; width: 149px; height: 17px; border: 1px solid #ccc; border-radius: 2px; margin-left: -4px; margin-right: -7px; }
.search input { flex: 1; padding-left: 2px; }
.search input::placeholder { color: #888; }

.ribbon { display: flex; height: 102px; border-bottom: 1px solid #d4d4d4; }
.group { display: flex; flex-direction: column; margin: 2px 0 4px; border-right: 1px solid #d6d6d6; }
.gtop { display: flex; height: 72px; }
.glabel { display: flex; justify-content: center; align-items: center; gap: 5px; height: 20px; margin-top: auto; }
.col { display: flex; flex-direction: column; align-items: flex-start; gap: 3px; padding-top: 3px; }
.rb { display: flex; align-items: center; gap: 3px; height: 20px; }
.rb .caret { margin-left: 5px; }
.rb.on { background: #c1d9f3; border-radius: 3px; width: 70px; }
.big { display: flex; flex-direction: column; align-items: center; gap: 6px; padding-top: 2px; }
.dis { color: #b5b5b5; }
.dis .caret { border-top-color: #b5b5b5; }
.g0 { width: 143px; } .g1 { width: 250px; } .g2 { width: 219px; } .g3 { width: 76px; } .g4 { width: 141px; }
.g5 { width: 302px; } .g6 { width: 78px; } .g7 { width: 219px; } .g8 { width: 192px; }
.g0 .gtop { padding-left: 14px; gap: 8px; }
.g1 .gtop { padding-left: 8px; gap: 17px; }
.g2 .gtop { padding-left: 8px; gap: 5px; }
.g3 .gtop { padding-left: 13px; gap: 16px; }
.g4 .gtop { padding-left: 10px; gap: 10px; }
.g5 .gtop { padding-left: 12px; gap: 12px; }
.g5 .col { margin-left: -4px; }
.g5 .col + .col { margin-left: 2px; }
.g6 .gtop, .g6 .glabel { justify-content: center; padding-right: 4px; }
.g7 .gtop { padding-left: 8px; gap: 6px; }
.g8 .gtop { padding-left: 8px; gap: 16px; }

.combos { display: flex; gap: 7px; height: 26px; padding: 2px 3px; background: #f1f1f1; }
.combo { display: flex; align-items: center; width: 98px; height: 22px; background: #fff; border: 1px solid #ddd; border-radius: 3px; padding-right: 4px; }
.combo select { flex: 1; appearance: none; padding-left: 2px; }

.body { flex: 1; display: flex; min-height: 0; }
.strip { display: flex; justify-content: flex-end; align-items: center; height: 12px; background: #e6e6e6; border-bottom: 1px solid #d5d5d5; flex: none; padding-right: 3px; }
.strip svg { width: 9px; height: 9px; }
.nav { display: flex; flex-direction: column; width: 66px; margin-right: 4px; border: 1px solid #d9d9d9; }
.navtitle { height: 22px; line-height: 20px; padding-left: 8px; background: #f1f1f1; color: #888; border-bottom: 1px solid #ddd; }
.navtools { display: flex; align-items: center; gap: 7px; height: 27px; padding-left: 6px; border-bottom: 1px solid #d9d9d9; }
.navlist { display: flex; flex-direction: column; gap: 3px; padding-top: 3px; }
.cat { height: 25px; text-align: left; padding-left: 3px; background: #ececec; }
.item { display: flex; align-items: center; justify-content: space-between; height: 25px; padding: 0 5px 0 17px; }
.item.on { background: #d3e6fd; }

.side { display: flex; flex-direction: column; width: 288px; gap: 5px; padding-bottom: 20px; }
.panel { display: flex; flex-direction: column; border: 1px solid #d5d5d5; overflow: hidden; }
.drawpanel { height: 418px; }
.attrpanel { flex: 1; }
.ptabs { display: flex; height: 22px; background: #f1f1f1; flex: none; }
.ptabs button { width: 65px; border: 1px solid #ccc; border-left: 0; color: #888; background: #e2e2e2; }
.ptabs button.on { background: #f5f5f5; color: #222; }
.ptools { display: flex; align-items: center; gap: 5px; height: 28px; padding: 0 2px 0 3px; flex: none; }
.ptools button { display: flex; align-items: center; gap: 4px; }
.ptools .caret { margin: 0 0 0 4px; }
.ptools .more { margin-left: auto; border: 1px solid #e5e5e5; border-radius: 3px; height: 20px; }
.more svg { width: 10px; height: 14px; }

.grid { border-collapse: collapse; table-layout: fixed; width: 100%; flex: none; }
.grid th, .grid td { height: 21px; padding: 0 3px; border: 1px solid #d9d9d9; font-weight: 400; line-height: 16px; overflow: hidden; white-space: nowrap; text-align: left; }
.grid th { text-align: center; }
.grid .num { text-align: center; padding: 0; }
.grid tr > :first-child { border-left: 0; }
.grid th.cut { text-align: left; padding-left: 16px; }
.c125 { width: 126px; } .c61 { width: 61px; } .c21 { width: 21px; } .c107 { width: 107px; } .c42 { width: 42px; }
.draws .c61 { width: 60px; }
.c30 { width: 30px; } .c34 { width: 34px; } .c111 { width: 111px; } .c76 { width: 76px; } .c101 { width: 101px; } .c99 { width: 99px; } .c105 { width: 105px; }
.draws th.sel { background: #80baf8; color: #fff; font-weight: 700; }
.root td { background: #d6e9fd; }
.root td:first-child { outline: 2px solid #7d7d7d; outline-offset: -2px; }
.root b { display: inline-block; width: 13px; height: 13px; line-height: 11px; margin-right: 5px; border: 1px solid #777; border-radius: 2px; text-align: center; font-weight: 400; }
.grid .tree { position: relative; padding-left: 31px; }
.tree::before { content: ""; position: absolute; left: 9px; top: 0; bottom: 0; border-left: 1px solid #ddd; }
.tree::after { content: ""; position: absolute; left: 9px; top: 10px; width: 16px; border-top: 1px solid #ddd; }
tr:last-child .tree::before { bottom: 10px; }
.hscroll { display: flex; align-items: center; gap: 4px; margin-top: auto; height: 15px; padding: 0 5px; }
.hscroll span { width: 206px; height: 8px; border-radius: 4px; background: #c9c9c9; }
.hscroll i { border: 4px solid transparent; }
.hscroll .l { border-right-color: #4b5468; border-left: 0; }
.hscroll .r { border-left-color: #4b5468; border-right: 0; margin-left: auto; }
.atitle { height: 20px; line-height: 20px; padding-left: 8px; background: #f1f1f1; color: #888; }
.gutter { display: flex; align-items: flex-start; width: 4px; padding-top: 431px; }
.gutter button { width: 4px; height: 100px; background: #5d6673; }

.canvas { position: relative; flex: 1; min-width: 0; background: #000; overflow: hidden; }
.cad { width: 100%; height: 100%; }
.ct { font: 100 37px "Noto Sans ExtraCondensed Thin", "Noto Sans ExtraCondensed", "Open Sans Condensed Light", "Roboto Condensed", "Liberation Sans Narrow", sans-serif; fill: #d8f078; }
.spec { font-size: 41px; }
.cj { font: 300 18px "Noto Sans CJK SC", sans-serif; fill: #d8f078; }
.wh { fill: #ccc; }
.ax { font: 14px "Noto Sans", sans-serif; }
.viewbar { position: absolute; right: 0; top: 0; width: 33px; height: 228px; padding-top: 12px; display: flex; flex-direction: column; align-items: center; gap: 9px; background: #fff; border: 1px solid #ddd; border-radius: 3px; }
.viewbar button { display: flex; flex-direction: column; align-items: center; gap: 7px; }
.viewbar .caret { border-width: 3px; border-top: 5px solid #4b5468; border-bottom: 0; margin-bottom: -2px; }
.viewbar hr { width: 23px; margin: -3px 0; border: 0; border-top: 1px solid #4b5468; }

.status { position: relative; display: flex; align-items: center; height: 31px; background: #fbfbfb; flex: none; }
.s1 { width: 120px; padding-left: 2px; } .s2 { width: 142px; padding-left: 2px; } .s3 { width: 110px; } .s4 { width: 110px; }
.stb { display: flex; gap: 3px; }
.stb button { display: flex; align-items: center; justify-content: center; gap: 4px; width: 25px; height: 25px; border: 1px solid #999; border-radius: 3px; background: #fff; }
.stb .wide { width: 36px; }
.stb .on { background: #d3e6fd; border-color: #3b87e0; }
.taskbar { position: relative; z-index: 5; display: flex; height: 8px; padding-left: 48px; background: linear-gradient(90deg, #203a42, #39454c 45%, #16233f); flex: none; overflow: hidden; }
.win { width: 344px; background: #f1f1f1; }
.lit { width: 48px; margin-left: 150px; background: #55666e; }
.taskbar time { margin: 4px 22px 0 auto; color: #fff; }

.dialog { position: absolute; left: 667px; right: 151px; top: 551px; bottom: 8px; display: flex; flex-direction: column; padding: 0 11px; background: linear-gradient(#e4e4e4 95%, #fff); border: 1px solid #bbb; border-bottom: 0; }
.dhead { display: flex; align-items: center; gap: 12px; height: 38px; margin-right: -1px; flex: none; }
.dhead h2 { font-size: 14px; margin-right: auto; }
.dtabs { display: flex; align-items: flex-end; gap: 4px; height: 27px; flex: none; }
.dtabs button { width: 57px; height: 21px; background: #d5d5d5; border: 1px solid #ccc; border-bottom: 0; border-radius: 4px 4px 0 0; }
.dtabs .on { height: 26px; margin-bottom: -1px; background: #fff; color: #1a7ae8; position: relative; z-index: 1; }
.dbody { flex: 1; display: flex; flex-direction: column; min-height: 0; background: #fff; border: 1px solid #c5c5cc; border-bottom: 0; padding: 5px 6px 0 6px; }
.dcols { flex: 1; display: flex; gap: 5px; min-height: 0; }
.pbox { width: 256px; border: 1px solid #c2c2c2; padding-right: 2px; }
.ptab th, .ptab .num, .ctab th, .ctab .num { background: #efefef; border-color: #c2c2c2; }
.blue { color: #1659f5; }
.rbox { flex: 1; display: flex; flex-direction: column; min-width: 0; }
.bar1 { height: 28px; border: 1px solid #ccc; border-radius: 3px; flex: none; }
.bar2 { display: flex; align-items: center; height: 30px; margin: 6px 0; border: 1px solid #ccc; border-radius: 3px; flex: none; }
.dsearch { display: flex; align-items: center; width: 400px; height: 26px; margin-left: 124px; padding-right: 3px; border: 1px solid #ccc; border-radius: 3px; }
.dsearch input { flex: 1; }
.tbox { position: relative; flex: 1; min-height: 0; border: 1px solid #c2c2c2; overflow: hidden; }
.ctab thead th { height: 17px; }
.grid .pale td { background: #e8f5ff; }
.ctab .tree { padding-left: 32px; }
.ctab .cur { background: #80baf8; color: #fff; font-weight: 700; }
.grid .bad { background: #fdc9c9; }
.grid .edit { padding: 0; }
.edit div { display: flex; align-items: center; height: 20px; border: 2px solid #5f9fe8; padding-left: 2px; background: #fff; }
.edit input { width: 74px; }
.edit u { width: 1px; height: 14px; background: #000; margin-right: 6px; }
.thumb { position: absolute; left: 14px; bottom: 3px; width: 566px; height: 8px; border-radius: 4px; background: #c9c9c9; }
.dfoot { display: flex; height: 32px; padding-top: 8px; flex: none; overflow: hidden; }
.dfoot p { white-space: nowrap; line-height: 18px; }
.dfoot .hint { margin: 0 auto 0 6px; }
.dfoot button { width: 80px; height: 28px; margin-top: 4px; border-radius: 3px; flex: none; }
.ok { background: #2b7de0; color: #fff; }
.dfoot .cancel { margin-left: 6px; border: 1px solid #bbb; background: #fff; }

.tip { position: absolute; left: 1034px; top: 586px; width: 360px; height: 136px; padding: 8px 0 0 10px; background: #fff; border: 1px solid #666; color: #000; }
.tip p { line-height: 20px; white-space: nowrap; }
.tail { position: absolute; left: 194px; top: 133px; width: 22px; height: 11px; }
.q { font-family: "Noto Sans CJK SC", sans-serif; line-height: 1px; }

.alert { position: absolute; left: 772px; top: 413px; width: 361px; height: 317px; display: flex; flex-direction: column; background: linear-gradient(#e3e3e3, #e5e5e5 38%, #fafafa 46%, #fdfdfd); border: 1px solid #bbb; box-shadow: 0 1px 4px #0003; }
.ahead { display: flex; align-items: center; justify-content: space-between; height: 38px; padding: 0 11px 0 16px; font-size: 14px; }
.acont { display: flex; gap: 11px; padding: 8px 0 0 25px; font-size: 14px; }
.warn { width: 28px; height: 28px; margin-top: 5px; }
.atext p { line-height: 26px; white-space: nowrap; }
.aclose { position: absolute; right: 11px; bottom: 9px; width: 78px; height: 26px; background: #2b7de0; color: #fff; border-radius: 3px; padding: 4px 9px; }
.aclose span { display: block; height: 18px; line-height: 16px; border: 1px dotted #c98a4b; }
</style>
